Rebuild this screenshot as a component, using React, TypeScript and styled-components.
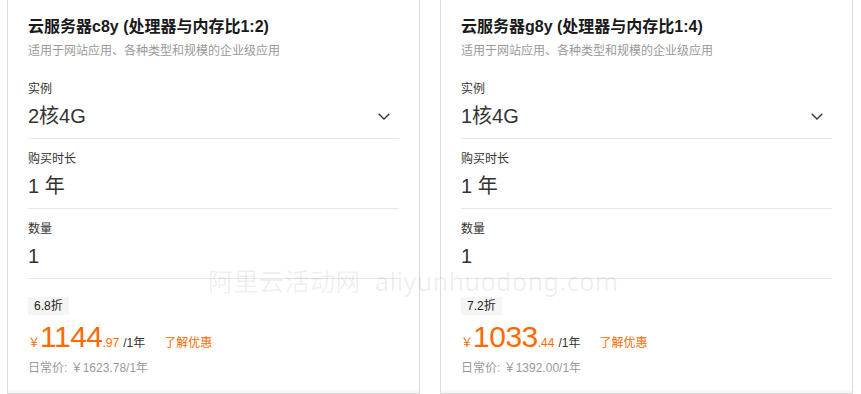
import styled, { createGlobalStyle } from "styled-components";

const GlobalStyle = createGlobalStyle`
    html, body {
        margin: 0;
        padding: 0;
        background: #fff;
        overflow: hidden;
    }
    body {
        font-family: "Liberation Sans", "Noto Sans CJK SC", sans-serif;
        color: #333;
    }
`;

const Page = styled.div`
    position: relative;
    display: flex;
    gap: 20px;
    padding-left: 7px;
    height: 394px;
    overflow: hidden;
`;

const Card = styled.section`
    box-sizing: border-box;
    width: 413px;
    border: 1px solid #dcdcdc;
    border-top: none;
    display: flex;
    flex-direction: column;
`;

const Body = styled.div`
    padding: 15px 20px 13px;
`;

const Header = styled.div`
    margin-bottom: 9px;
`;

const Title = styled.h3`
    margin: 0;
    font-size: 16px;
    line-height: 24px;
    font-weight: bold;
    color: #1a1a1a;
`;

const Desc = styled.p`
    margin: 3px 0 0;
    font-size: 12px;
    line-height: 18px;
    color: #999;
`;

const Field = styled.div`
    padding: 12px 0 8px;
    border-bottom: 1px solid #e8e8e8;
`;

const Label = styled.div`
    font-size: 12px;
    line-height: 16px;
    color: #333;
`;

const Value = styled.div`
    margin-top: 5px;
    display: flex;
    align-items: center;
    justify-content: space-between;
    font-size: 20px;
    line-height: 28px;
    color: #333;
`;

const Chevron = styled.svg`
    width: 12px;
    height: 7px;
    margin-right: 9px;
`;

const PriceBox = styled.div`
    padding-top: 17px;
`;

const Badge = styled.span`
    display: inline-block;
    padding: 0 6px;
    height: 18px;
    line-height: 18px;
    font-size: 12px;
    color: #222;
    background: #f5f5f5;
`;

const PriceRow = styled.div`
    margin-top: 4px;
    display: flex;
    align-items: baseline;
    height: 36px;
    color: #ff6a00;
`;

const Small = styled.span<{ $dark?: boolean }>`
    font-size: 12px;
    line-height: 18px;
    color: ${(p) => (p.$dark ? "#333" : "#ff6a00")};
`;

const Big = styled.span`
    font-size: 30px;
    line-height: 36px;
    letter-spacing: -0.5px;
`;

const Unit = styled(Small)`
    margin-left: 4px;
`;

const Link = styled.a`
    margin-left: 19px;
    font-size: 12px;
    line-height: 18px;
    color: #ff6a00;
    text-decoration: none;
`;

const OldPrice = styled.div`
    margin-top: 4px;
    font-size: 12px;
    line-height: 18px;
    color: #999;
`;

const Footer = styled.div`
    flex: 1;
    background: #f7f7f7;
`;

const Watermark = styled.div`
    position: absolute;
    left: 208px;
    top: 271px;
    font-family: "Noto Sans", "Noto Sans CJK SC", sans-serif;
    font-size: 25px;
    line-height: 20px;
    letter-spacing: 0.5px;
    white-space: pre;
    color: rgba(0, 0, 0, 0.075);
    pointer-events: none;
`;

type Plan = {
    name: string;
    spec: string;
    discount: string;
    price: string;
    cents: string;
    original: string;
};

const plans: Plan[] = [
    { name: "云服务器c8y (处理器与内存比1:2)", spec: "2核4G", discount: "6.8折", price: "1144", cents: ".97", original: "1623.78" },
    { name: "云服务器g8y (处理器与内存比1:4)", spec: "1核4G", discount: "7.2折", price: "1033", cents: ".44", original: "1392.00" },
];

const PlanCard = ({ plan }: { plan: Plan }) => (
    <Card>
        <Body>
            <Header>
                <Title>{plan.name}</Title>
                <Desc>适用于网站应用、各种类型和规模的企业级应用</Desc>
            </Header>
            <Field>
                <Label>实例</Label>
                <Value>
                    {plan.spec}
                    <Chevron viewBox="0 0 12 7" fill="none">
                        <polyline points="0.7,0.7 6,6 11.3,0.7" stroke="#333" strokeWidth="1.3" />
                    </Chevron>
                </Value>
            </Field>
            <Field>
                <Label>购买时长</Label>
                <Value>1 年</Value>
            </Field>
            <Field>
                <Label>数量</Label>
                <Value>1</Value>
            </Field>
            <PriceBox>
                <Badge>{plan.discount}</Badge>
                <PriceRow>
                    <Small>￥</Small>
                    <Big>{plan.price}</Big>
                    <Small>{plan.cents}</Small>
                    <Unit $dark>/1年</Unit>
                    <Link href="#">了解优惠</Link>
                </PriceRow>
                <OldPrice>日常价: ￥{plan.original}/1年</OldPrice>
            </PriceBox>
        </Body>
        <Footer />
    </Card>
);

const App = () => {
    return (
        <>
            <GlobalStyle />
            <Page>
                {plans.map((p) => (
                    <PlanCard key={p.name} plan={p} />
                ))}
                <Watermark>{"阿里云活动网  aliyunhuodong.com"}</Watermark>
            </Page>
        </>
    );
};

export default App;
